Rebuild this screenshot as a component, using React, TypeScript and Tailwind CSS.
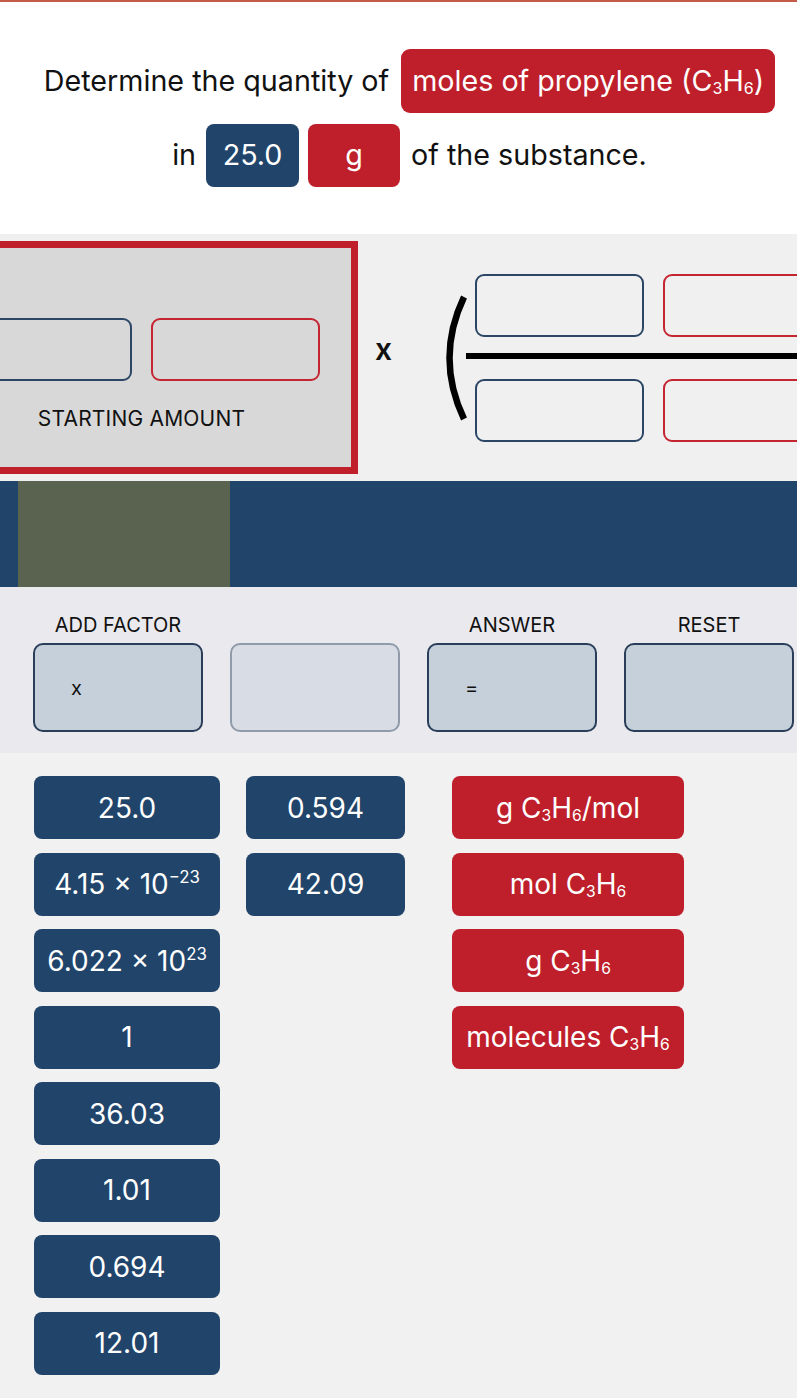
import React from "react";

const NAVY = "bg-[#21446a]";
const RED = "bg-[#be1f2b]";

function Sub({ children }: { children: React.ReactNode }) {
  return <span className="relative top-[0.2em] text-[0.56em] leading-none">{children}</span>;
}

function Sup({ children }: { children: React.ReactNode }) {
  return <span className="relative -top-[0.65em] text-[0.6em] leading-none">{children}</span>;
}

function C3H6() {
  return (
    <>
      C<Sub>3</Sub>H<Sub>6</Sub>
    </>
  );
}

function Tile({ color, w, children }: { color: string; w: string; children: React.ReactNode }) {
  return (
    <div
      className={`${color} ${w} h-[63px] shrink-0 rounded-[8px] flex items-center justify-center text-white text-[28px] leading-none whitespace-nowrap`}
    >
      <span>{children}</span>
    </div>
  );
}

function Slot({ tone, extra = "" }: { tone: "navy" | "red"; extra?: string }) {
  const border = tone === "navy" ? "border-[#2c4766]" : "border-[#c42531]";
  return <div className={`w-[169px] h-[63px] shrink-0 rounded-[9px] border-2 ${border} ${extra}`} />;
}

export default function App() {
  return (
    <div className="w-[797px] min-h-[1398px] bg-[#f1f1f1] overflow-hidden font-['Inter','Noto_Sans',sans-serif] text-[#111]">
      {/* prompt */}
      <header className="h-[234px] bg-white flex flex-col">
        <div className="h-[2px] bg-[#c45a47]" />
        <div className="flex flex-col items-center pt-[47px] pl-[22px] gap-[11px] text-[28.7px] leading-none">
          <div className="flex items-center gap-[12px]">
            <span>Determine the quantity of</span>
            <span className={`${RED} text-white h-[64px] px-[11px] rounded-[9px] flex items-center`}>
              <span>
                moles of propylene (<C3H6 />)
              </span>
            </span>
          </div>
          <div className="flex items-center">
            <span className="mr-[10px]">in</span>
            <span className={`${NAVY} text-white w-[93px] h-[63px] rounded-[8px] flex items-center justify-center`}>
              25.0
            </span>
            <span className={`${RED} text-white w-[92px] h-[63px] ml-[9px] rounded-[8px] flex items-center justify-center`}>
              g
            </span>
            <span className="ml-[11px]">of the substance.</span>
          </div>
        </div>
      </header>

      {/* workspace */}
      <section className="h-[247px] bg-[#f0f0f0] overflow-hidden flex items-center">
        <div className="ml-[-75px] w-[433px] h-[233px] shrink-0 border-[7px] border-[#c0202b] bg-[#d8d8d8] flex flex-col items-center pt-[70px]">
          <div className="flex gap-[19px]">
            <Slot tone="navy" />
            <Slot tone="red" />
          </div>
          <div className="mt-[26px] text-[21px] leading-[24px] tracking-[0.2px]">STARTING AMOUNT</div>
        </div>
        <div className="ml-[17px] -mt-[18px] text-[30px] font-semibold leading-none">x</div>
        <svg className="ml-[45px] shrink-0" width="30" height="128" viewBox="0 0 30 128">
          <path d="M27 3 Q-2 64 27 125" fill="none" stroke="#000" strokeWidth="6.5" />
        </svg>
        <div className="flex flex-col -ml-[1px] shrink-0">
          <div className="flex gap-[19px] pl-[9px]">
            <Slot tone="navy" extra="h-[62px] w-[168px]" />
            <Slot tone="red" />
          </div>
          <div className="mt-[16px] mb-[20px] h-[6px] w-[400px] bg-black" />
          <div className="flex gap-[19px] pl-[9px]">
            <Slot tone="navy" extra="h-[62px] w-[168px]" />
            <Slot tone="red" />
          </div>
        </div>
      </section>

      {/* progress band */}
      <div className="h-[106px] bg-[#21456a] flex">
        <div className="ml-[18px] w-[212px] h-full bg-[#5a634f]" />
      </div>

      {/* controls */}
      <section className="h-[166px] bg-[#e9e9ee] pl-[33px] pt-[26px]">
        <div className="grid grid-cols-[170px_170px_170px_170px] gap-x-[27px] text-[20px] leading-[24px] text-center">
          <div>ADD FACTOR</div>
          <div />
          <div>ANSWER</div>
          <div>RESET</div>
        </div>
        <div className="mt-[6px] grid grid-cols-[170px_170px_170px_170px] gap-x-[27px]">
          <div className="h-[89px] rounded-[10px] border-2 border-[#2a3e59] bg-[#c5d0da] flex items-center pl-[36px] text-[20px]">
            x
          </div>
          <div className="h-[89px] rounded-[10px] border-2 border-[#8f9bab] bg-[#d8dce4]" />
          <div className="h-[89px] rounded-[10px] border-2 border-[#2a3e59] bg-[#c5d0da] flex items-center pl-[36px] text-[20px]">
            =
          </div>
          <div className="h-[89px] rounded-[10px] border-2 border-[#2a3e59] bg-[#c5d0da]" />
        </div>
      </section>

      {/* tile bank */}
      <section className="flex items-start pt-[23px] pl-[34px]">
        <div className="flex flex-col gap-[13.5px]">
          <Tile color={NAVY} w="w-[186px]">25.0</Tile>
          <Tile color={NAVY} w="w-[186px]">
            4.15 × 10<Sup>−23</Sup>
          </Tile>
          <Tile color={NAVY} w="w-[186px]">
            6.022 × 10<Sup>23</Sup>
          </Tile>
          <Tile color={NAVY} w="w-[186px]">1</Tile>
          <Tile color={NAVY} w="w-[186px]">36.03</Tile>
          <Tile color={NAVY} w="w-[186px]">1.01</Tile>
          <Tile color={NAVY} w="w-[186px]">0.694</Tile>
          <Tile color={NAVY} w="w-[186px]">12.01</Tile>
        </div>
        <div className="ml-[26px] flex flex-col gap-[13.5px]">
          <Tile color={NAVY} w="w-[159px]">0.594</Tile>
          <Tile color={NAVY} w="w-[159px]">42.09</Tile>
        </div>
        <div className="ml-[47px] flex flex-col gap-[13.5px]">
          <Tile color={RED} w="w-[232px]">
            g <C3H6 />/mol
          </Tile>
          <Tile color={RED} w="w-[232px]">
            mol <C3H6 />
          </Tile>
          <Tile color={RED} w="w-[232px]">
            g <C3H6 />
          </Tile>
          <Tile color={RED} w="w-[232px]">
            molecules <C3H6 />
          </Tile>
        </div>
      </section>
    </div>
  );
}
